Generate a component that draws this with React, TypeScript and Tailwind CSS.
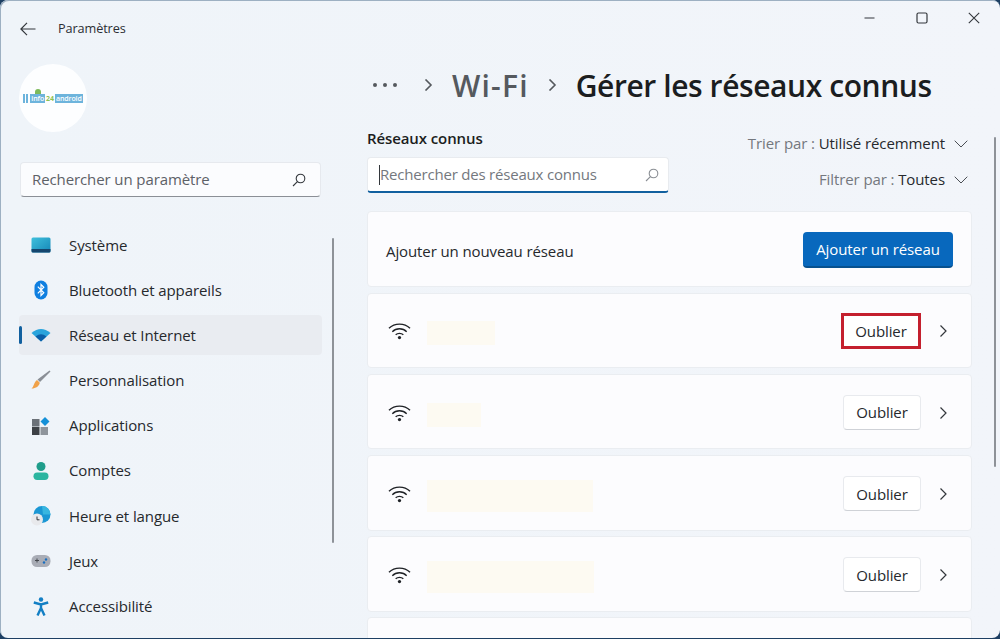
import { ReactNode } from "react";

const font = { fontFamily: '"Open Sans", "Noto Sans", sans-serif' };

const SystemIcon = () => (
  <svg width="20" height="16" viewBox="0 0 20 16">
    <defs>
      <linearGradient id="sys" x1="0" y1="0" x2="1" y2="1">
        <stop offset="0" stopColor="#3fc0dc" />
        <stop offset="1" stopColor="#1587b8" />
      </linearGradient>
    </defs>
    <rect x="0.5" y="0.5" width="19" height="15" rx="1.5" fill="url(#sys)" />
    <path d="M0.5 12h19v2a1.5 1.5 0 0 1-1.5 1.5H2A1.5 1.5 0 0 1 .5 14z" fill="#15466e" />
  </svg>
);

const BluetoothIcon = () => (
  <svg width="16" height="20" viewBox="0 0 16 20">
    <rect x="1.500" y="0.500" width="13" height="19" rx="6.500" fill="#0f7fe0" />
    <path d="M4.800 6.600l6 6.200L8 15.500v-11l2.800 2.700-6 6.200" fill="none" stroke="#fff" strokeWidth="1.200" />
  </svg>
);

const WifiFilledIcon = () => (
  <svg width="20" height="14" viewBox="0 0 20 14">
    <path d="M10 13.500L0.500 5Q10 -3 19.500 5z" fill="#2aa4dc" />
    <path d="M10 13.500L4.500 8.500Q10 4 15.500 8.500z" fill="#0b5fa8" />
  </svg>
);

const BrushIcon = () => (
  <svg width="20" height="20" viewBox="0 0 20 20">
    <path d="M18.500 0.500L19.500 1.500L9 12L6.500 9.500z" fill="#8a8f96" />
    <path d="M6 10L8.800 12.700C8.200 16 5 18.500 0.500 18.500C3 17 2.500 12.500 6 10z" fill="#f0a24a" />
  </svg>
);

const AppsIcon = () => (
  <svg width="18" height="18" viewBox="0 0 18 18">
    <rect x="0" y="2" width="7.500" height="7.500" fill="#6b7178" />
    <rect x="0" y="10" width="7.500" height="8" fill="#3d4146" />
    <rect x="8.500" y="10" width="7.500" height="8" fill="#8f959c" />
    <path d="M13 0L17.500 4.500L13 9L8.500 4.500z" fill="#1490d8" />
  </svg>
);

const AccountIcon = () => (
  <svg width="16" height="18" viewBox="0 0 16 18">
    <circle cx="8" cy="4.500" r="4.500" fill="#1f9d8b" />
    <rect x="0.500" y="10.500" width="15" height="7.500" rx="3.700" fill="#2bb5a0" />
  </svg>
);

const TimeIcon = () => (
  <svg width="20" height="20" viewBox="0 0 20 20">
    <circle cx="11" cy="8.500" r="8.500" fill="#1b97d4" />
    <path d="M11 0a8.500 8.500 0 0 1 8.500 8.500H12z" fill="#38b6e0" />
    <circle cx="6" cy="13.500" r="6" fill="#e8e9ec" />
    <path d="M6 10.500v3.300h2.500" fill="none" stroke="#33373c" strokeWidth="1" />
  </svg>
);

const GameIcon = () => (
  <svg width="20" height="14" viewBox="0 0 20 14">
    <rect x="0.500" y="1" width="19" height="12" rx="5.500" fill="#a9adb6" />
    <path d="M4 6.500h4M6 4.500v4" stroke="#44484e" strokeWidth="1" />
    <circle cx="13" cy="8.500" r="1.200" fill="#1a6fc0" />
    <circle cx="15" cy="5.500" r="1.200" fill="#1a6fc0" />
  </svg>
);

const AccessIcon = () => (
  <svg width="16" height="19" viewBox="0 0 16 19">
    <circle cx="8" cy="2.500" r="2.200" fill="#137fc4" />
    <path d="M0.800 5.500L8 7.500L15.200 5.500M8 7.500V11M8 11L4.500 18.500M8 11L11.500 18.500" fill="none" stroke="#137fc4" strokeWidth="2.400" />
  </svg>
);

const SearchIcon = ({ color }: { color: string }) => (
  <svg width="14" height="14" viewBox="0 0 14 14" fill="none" stroke={color} strokeWidth="1.100">
    <circle cx="8.500" cy="5.500" r="4.300" />
    <path d="M5.400 8.600L1 13" />
  </svg>
);

const Chevron = ({ size = 12, width = 1.200, color = "#33373c" }: { size?: number; width?: number; color?: string }) => (
  <svg width={size} height={size} viewBox="0 0 12 12" fill="none" stroke={color} strokeWidth={width}>
    <path d="M3.500 0.500L9 6L3.500 11.500" />
  </svg>
);

const ChevronDown = () => (
  <svg width="14" height="8" viewBox="0 0 14 8" fill="none" stroke="#4a4e54" strokeWidth="1">
    <path d="M0.700 0.700L7 7L13.300 0.700" />
  </svg>
);

const WifiIcon = () => (
  <svg width="23" height="18" viewBox="0 0 24 18" fill="none" stroke="#1f2226" strokeWidth="1.400">
    <path d="M1 6.200C7 0.300 17 0.300 23 6.200" />
    <path d="M4.500 9.700C8.500 5.600 15.500 5.600 19.500 9.700" />
    <path d="M8 13C10.200 10.900 13.800 10.900 16 13" />
    <circle cx="12" cy="15.800" r="1.700" fill="#1f2226" stroke="none" />
  </svg>
);

const navItems: { label: string; icon: ReactNode; active?: boolean }[] = [
  { label: "Système", icon: <SystemIcon /> },
  { label: "Bluetooth et appareils", icon: <BluetoothIcon /> },
  { label: "Réseau et Internet", icon: <WifiFilledIcon />, active: true },
  { label: "Personnalisation", icon: <BrushIcon /> },
  { label: "Applications", icon: <AppsIcon /> },
  { label: "Comptes", icon: <AccountIcon /> },
  { label: "Heure et langue", icon: <TimeIcon /> },
  { label: "Jeux", icon: <GameIcon /> },
  { label: "Accessibilité", icon: <AccessIcon /> },
];

const networks = [
  { width: "w-[68px]", height: "h-[24px]", highlighted: true },
  { width: "w-[54px]", height: "h-[24px]" },
  { width: "w-[166px]", height: "h-[32px]" },
  { width: "w-[167px]", height: "h-[32px]" },
];

const Logo = () => (
  <div className="flex items-center gap-[1px] text-[7px] leading-[9px] font-semibold text-white tracking-[-0.100px]">
    <span className="w-[2px] h-[9px] bg-[#6db4dc]" />
    <span className="w-[2px] h-[9px] bg-[#6db4dc] mr-[1px]" />
    <span className="bg-[#6db4dc] px-[1px] relative">
      info
      <span className="absolute left-[5px] -top-[5px] w-[6px] h-[5px] rounded-t-full bg-[#7dba5a]" />
    </span>
    <span className="text-[#8cc152] font-bold">24</span>
    <span className="bg-[#6db4dc] px-[1px]">android</span>
  </div>
);

function Sidebar() {
  return (
    <aside className="relative w-[340px] shrink-0 h-full">
      <div className="flex items-center h-[58px] pl-[20px]">
        <svg width="16" height="14" viewBox="0 0 16 14" fill="none" stroke="#33373c" strokeWidth="1.200">
          <path d="M15.500 7H1M7 0.800L0.900 7L7 13.200" />
        </svg>
        <span className="ml-[22px] text-[12.700px] text-[#2b2e33]">Paramètres</span>
      </div>
      <div className="ml-[19px] mt-[6px] w-[68px] h-[68px] rounded-full bg-[#fdfeff] flex items-center justify-center">
        <Logo />
      </div>
      <div className="ml-[20px] mt-[30px] w-[301px] h-[35px] rounded-[4px] bg-[#fbfcfe] border border-[#e6e9ee] border-b-[#8b8f96] flex items-center justify-between pl-[11px] pr-[14px]">
        <span className="text-[15px] text-[#5d6167]">Rechercher un paramètre</span>
        <SearchIcon color="#33373c" />
      </div>
      <nav className="mt-[28px] ml-[19px] w-[303px] flex flex-col gap-[5.150px]">
        {navItems.map((item) => (
          <div
            key={item.label}
            className={`relative h-[40px] flex items-center rounded-[4px] ${item.active ? "bg-[#e9ecf1]" : ""}`}
          >
            {item.active && <span className="absolute left-0 top-[11px] w-[3px] h-[18px] rounded-full bg-[#11609f]" />}
            <span className="w-[44px] mr-[6px] shrink-0 flex items-center justify-center">{item.icon}</span>
            <span className="text-[15px] text-[#26292d]">{item.label}</span>
          </div>
        ))}
      </nav>
      <span className="absolute left-[332px] top-[238px] w-[2px] h-[305px] rounded-full bg-[#8e9298]" />
    </aside>
  );
}

function NetworkRow({ width, height, highlighted }: { width: string; height: string; highlighted?: boolean }) {
  return (
    <div className="h-[75.600px] shrink-0 rounded-[4px] bg-[#fcfcfe] border border-[#eaedf1] flex items-center pt-[2px] pl-[20px] pr-[22px]">
      <WifiIcon />
      <div className={`ml-[16px] mt-[4px] ${width} ${height} bg-[#fdfaf2]`} />
      <div
        className={`ml-auto flex items-center justify-center text-[15px] text-[#26292d] bg-white ${
          highlighted
            ? "w-[80px] h-[36px] border-[3px] border-[#c4202e]"
            : "w-[78px] h-[35px] rounded-[4px] border border-[#e8eaee] border-b-[#cfd2d7]"
        }`}
      >
        Oublier
      </div>
      <span className="ml-[16px]">
        <Chevron />
      </span>
    </div>
  );
}

function Content() {
  return (
    <main className="relative flex-1 h-full pl-[27px]">
      <div className="flex justify-end items-center h-[36px] pr-[20px] gap-[40px]">
        <svg width="12" height="12" viewBox="0 0 12 12" stroke="#33373c" strokeWidth="1.200">
          <path d="M0.500 6H10.500" />
        </svg>
        <svg width="12" height="12" viewBox="0 0 12 12" fill="none" stroke="#33373c" strokeWidth="1.200">
          <rect x="1" y="1" width="10" height="10" rx="1.500" />
        </svg>
        <svg width="12" height="12" viewBox="0 0 12 12" fill="none" stroke="#33373c" strokeWidth="1.100">
          <path d="M0.800 0.800L11.200 11.200M11.200 0.800L0.800 11.200" />
        </svg>
      </div>
      <div className="flex items-center h-[60px] mt-[19px]">
        <span className="flex gap-[6px] ml-[6px]">
          <span className="w-[4px] h-[4px] rounded-full bg-[#55595e]" />
          <span className="w-[4px] h-[4px] rounded-full bg-[#55595e]" />
          <span className="w-[4px] h-[4px] rounded-full bg-[#55595e]" />
        </span>
        <span className="ml-[25px]">
          <Chevron size={12} width={1.600} color="#55595e" />
        </span>
        <span className="ml-[18px] text-[30px] font-semibold text-[#55595e] tracking-[1.200px]">Wi-Fi</span>
        <span className="ml-[17px]">
          <Chevron size={12} width={1.600} color="#55595e" />
        </span>
        <span className="ml-[18px] text-[30px] font-semibold text-[#1b1d20] tracking-[-0.420px]">Gérer les réseaux connus</span>
      </div>
      <div className="flex justify-between mt-[15px] h-[62px] pr-[32px]">
        <div>
          <div className="text-[15px] leading-[20px] font-semibold text-[#1b1d20] mt-[-2px]">Réseaux connus</div>
          <div className="mt-[9px] w-[302px] h-[36px] rounded-[4px] bg-white border border-[#e8ebef] border-b-2 border-b-[#11609f] flex items-center justify-between pl-[11px] pr-[9px]">
            <span className="flex items-center text-[15px] text-[#74787e] tracking-[-0.200px]">
              <span className="w-[1px] h-[20px] bg-[#33373c]" />
              Rechercher des réseaux connus
            </span>
            <SearchIcon color="#8a8e94" />
          </div>
        </div>
        <div className="flex flex-col items-end gap-[15px] mt-[3px] text-[15px] leading-[21px]">
          <div className="flex items-center">
            <span className="text-[#74787e]">Trier par :&nbsp;</span>
            <span className="text-[#26292d]">Utilisé récemment</span>
            <span className="ml-[9px]"><ChevronDown /></span>
          </div>
          <div className="flex items-center">
            <span className="text-[#74787e]">Filtrer par :&nbsp;</span>
            <span className="text-[#26292d]">Toutes</span>
            <span className="ml-[9px]"><ChevronDown /></span>
          </div>
        </div>
      </div>
      <div className="mt-[19px] w-[605px] flex flex-col gap-[5.600px]">
        <div className="h-[76px] shrink-0 rounded-[4px] bg-[#fcfcfe] border border-[#eaedf1] flex items-center justify-between pt-[2px] pl-[18px] pr-[18px]">
          <span className="text-[15px] text-[#26292d] mt-[2px]">Ajouter un nouveau réseau</span>
          <span className="w-[150px] h-[36px] rounded-[4px] bg-[#0868bd] border-b-2 border-b-[#07518f] flex items-center justify-center text-[15px] text-white">
            Ajouter un réseau
          </span>
        </div>
        {networks.map((n, i) => (
          <NetworkRow key={i} {...n} />
        ))}
        <div className="h-[76px] shrink-0 rounded-[4px] bg-[#fcfcfe] border border-[#eaedf1]" />
      </div>
      <span className="absolute left-[654px] top-[137px] w-[2px] h-[330px] rounded-full bg-[#8e9298]" />
    </main>
  );
}

export default function App() {
  return (
    <div className="w-[1000px] h-[639px] overflow-hidden bg-[#1d3f63]" style={font}>
      <div className="flex w-[1000px] h-[638px] overflow-hidden rounded-[8px] shadow-[inset_1px_1px_0_#9db0c2] bg-gradient-to-r from-[#eff4f9] to-[#f2f5fa] tracking-[-0.100px]">
        <Sidebar />
        <Content />
      </div>
    </div>
  );
}
